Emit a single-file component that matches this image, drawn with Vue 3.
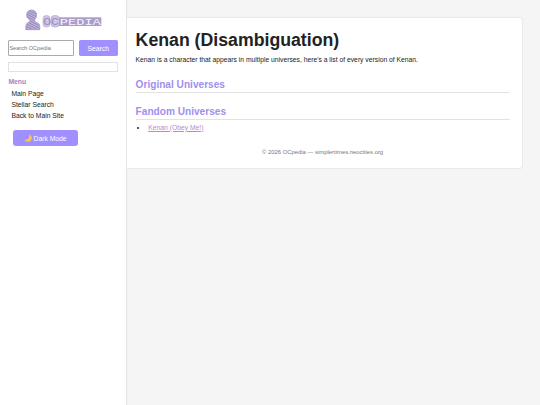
<template>
  <div class="layout">
    <aside class="sidebar">
      <a class="logo" href="#">
        <svg width="78" height="22" viewBox="0 0 78 22">
          <defs>
            <pattern id="hatch" width="2.2" height="2.2" patternUnits="userSpaceOnUse" patternTransform="rotate(28)">
              <rect width="2.2" height="2.2" fill="#a292c4" />
              <rect width="2.2" height="0.6" fill="#cdc3df" />
            </pattern>
          </defs>
          <!-- bust -->
          <path
            d="M6.500 1C9.800 1 11.700 3.300 11.600 6C11.500 8.200 10.800 9.400 9.700 10.700C9.500 12.300 10.300 12.900 11.800 13.500C14 14.300 14.800 15.600 14.800 18V20.700H.8V18C.8 15.300 2 14 4 13C5.200 12.300 5.300 11.600 4.700 10.700C2.900 9.900 1.600 8.600 1.600 6C1.600 3 3.400 1 6.500 1Z"
            fill="url(#hatch)"
            stroke="#a090c2"
            stroke-width="0.7"
          />
          <!-- wordmark -->
          <rect x="18" y="6.600" width="7" height="11.400" rx="3" fill="#cec6e1" stroke="#b0a2cf" stroke-width="0.6" />
          <rect x="26" y="6.600" width="8.200" height="11.400" rx="3" fill="#cec6e1" stroke="#b0a2cf" stroke-width="0.6" />
          <rect x="34" y="8.300" width="42.300" height="8.700" fill="#aa9dcb" />
          <text class="logo-oc" x="18.200" y="16" textLength="15.500" lengthAdjust="spacingAndGlyphs">OC</text>
          <text class="logo-name" x="34.800" y="15.500" textLength="41" lengthAdjust="spacingAndGlyphs">PEDIA</text>
        </svg>
      </a>

      <form class="search" @submit.prevent>
        <input v-model="query" type="text" placeholder="Search OCpedia" />
        <button type="submit">Search</button>
      </form>
      <div class="results"></div>

      <h3>Menu</h3>
      <ul class="menu">
        <li v-for="item in menu" :key="item"><a href="#">{{ item }}</a></li>
      </ul>

      <button class="theme-toggle" type="button">
        <svg width="8" height="8" viewBox="0 0 16 16">
          <path d="M10.500 .5C16.500 3.500 17 10.500 12.800 13.800C9 16.800 3 15.800 .5 11C4.500 12 7.500 11 9 8.500C10.500 6 11.300 3.500 10.500 .5Z" fill="#fbc257" />
        </svg>
        <span>Dark Mode</span>
      </button>
    </aside>

    <main class="content">
      <h1>Kenan (Disambiguation)</h1>
      <p>Kenan is a character that appears in multiple universes, here's a list of every version of Kenan.</p>
      <h2>Original Universes</h2>
      <h2>Fandom Universes</h2>
      <ul class="versions">
        <li><a href="#">Kenan (Obey Me!)</a></li>
      </ul>
      <footer>© 2026 OCpedia — simplertimes.neocities.org</footer>
    </main>
  </div>
</template>

<script setup>
import { ref } from 'vue'

const query = ref('')
const menu = ['Main Page', 'Stellar Search', 'Back to Main Site']
</script>

<style>
body {
  margin: 0;
  background: #f5f5f5;
}
</style>

<style scoped>
.layout {
  display: flex;
  align-items: flex-start;
  height: 405px;
  font-family: "Liberation Sans", Arial, sans-serif;
  font-size: 6.75px;
  color: #222;
}

* {
  box-sizing: border-box;
}

.sidebar {
  flex: none;
  width: 127px;
  height: 405px;
  padding: 9px 8.4px 0;
  background: #fff;
  border-right: 1px solid #e4e4e4;
}

.logo {
  display: block;
  height: 31px;
  padding-left: 16.6px;
}

.logo svg {
  display: block;
}

.logo-oc {
  font-family: "Liberation Mono", monospace;
  font-size: 11.5px;
  fill: #9a8bbf;
}

.logo-name {
  font-family: "Liberation Mono", monospace;
  font-size: 9px;
  fill: #f6f3fb;
}

.search {
  display: flex;
  justify-content: space-between;
  height: 16px;
}

.search input {
  width: 66px;
  height: 16px;
  padding: 0;
  border: 1px solid #aaa;
  border-radius: 1px;
  font-family: inherit;
  font-size: 5.6px;
  outline: none;
}

.search input::placeholder {
  color: #757575;
}

button {
  padding: 0;
  border: none;
  background: #9f8fff;
  color: #fff;
  font-family: inherit;
  font-size: 6.75px;
}

.search button {
  width: 38.6px;
  border-radius: 1.7px;
}

.results {
  height: 10px;
  margin-top: 6px;
  border: 1px solid #e2e2e2;
}

h3 {
  margin: 6px 0 0;
  font-size: 6.75px;
  line-height: 8px;
  color: #9b86c4;
}

.menu {
  margin: 2px 0 0;
  padding: 0 0 0 3px;
  list-style: none;
}

.menu li {
  height: 11px;
  line-height: 11px;
}

.menu a {
  color: #222;
  text-decoration: none;
}

.theme-toggle {
  display: flex;
  align-items: center;
  justify-content: center;
  gap: 1.5px;
  width: 65.5px;
  height: 16px;
  margin: 9px 0 0 4.2px;
  border-radius: 3px;
}

.content {
  flex: none;
  width: 396px;
  height: 152px;
  margin-top: 16.5px;
  padding: 12px 12.5px 0 8.6px;
  background: #fff;
  border: 1px solid #e9e9e9;
  border-left: none;
  border-radius: 0 3.4px 3.4px 0;
}

h1 {
  margin: 0;
  font-size: 17.72px;
  line-height: 21px;
}

p {
  margin: 4px 0 0;
  line-height: 10px;
}

h2 {
  height: 15px;
  margin: 12px 0 0;
  border-bottom: 1px solid #e2e2e2;
  font-size: 10.125px;
  line-height: 13px;
  color: #9f8fef;
}

p + h2 {
  margin-top: 13px;
}

.versions {
  margin: 3px 0 0;
  padding-left: 12.7px;
  line-height: 10px;
}

.versions a {
  color: #b58bd0;
}

footer {
  margin-top: 15px;
  text-align: center;
  font-size: 5.906px;
  line-height: 9px;
  color: #777;
}
</style>
